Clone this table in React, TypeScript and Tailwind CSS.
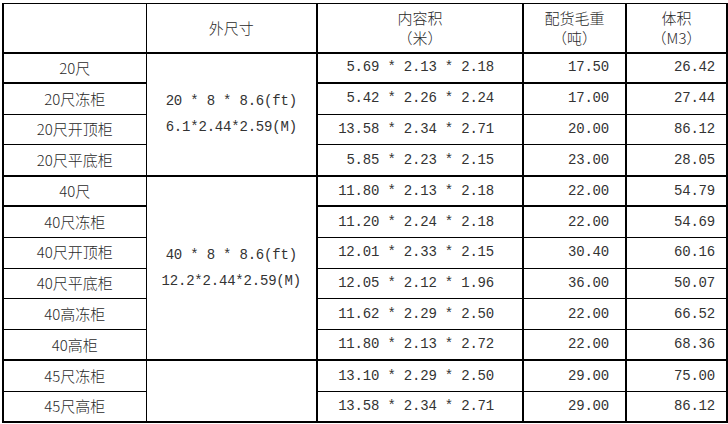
const rows = [
  { name: "20尺", inner: "5.69 * 2.13 * 2.18", weight: "17.50", vol: "26.42" },
  { name: "20尺冻柜", inner: "5.42 * 2.26 * 2.24", weight: "17.00", vol: "27.44" },
  { name: "20尺开顶柜", inner: "13.58 * 2.34 * 2.71", weight: "20.00", vol: "86.12" },
  { name: "20尺平底柜", inner: "5.85 * 2.23 * 2.15", weight: "23.00", vol: "28.05" },
  { name: "40尺", inner: "11.80 * 2.13 * 2.18", weight: "22.00", vol: "54.79" },
  { name: "40尺冻柜", inner: "11.20 * 2.24 * 2.18", weight: "22.00", vol: "54.69" },
  { name: "40尺开顶柜", inner: "12.01 * 2.33 * 2.15", weight: "30.40", vol: "60.16" },
  { name: "40尺平底柜", inner: "12.05 * 2.12 * 1.96", weight: "36.00", vol: "50.07" },
  { name: "40高冻柜", inner: "11.62 * 2.29 * 2.50", weight: "22.00", vol: "66.52" },
  { name: "40高柜", inner: "11.80 * 2.13 * 2.72", weight: "22.00", vol: "68.36" },
  { name: "45尺冻柜", inner: "13.10 * 2.29 * 2.50", weight: "29.00", vol: "75.00" },
  { name: "45尺高柜", inner: "13.58 * 2.34 * 2.71", weight: "29.00", vol: "86.12" },
];

// merged "外尺寸" cells: start row -> span + text lines
const outer: Record<number, { span: number; lines: string[] }> = {
  0: { span: 4, lines: ["20 * 8 * 8.6(ft)", "6.1*2.44*2.59(M)"] },
  4: { span: 6, lines: ["40 * 8 * 8.6(ft)", "12.2*2.44*2.59(M)"] },
  10: { span: 2, lines: [] },
};

const thickAfter = [0, 3, 4, 9, 11];

const cjk =
  "font-['Noto_Sans_CJK_SC',sans-serif] font-light text-[15px] text-[#2a2a2a] [text-spacing-trim:space-all]";
const mono = "font-['Liberation_Mono','Noto_Sans_CJK_SC',monospace] text-[14px] tracking-[-0.2px] text-[#333]";

export default function App() {
  return (
    <div className="w-[728px] h-[424px] bg-white pt-[3px] pl-[2px] overflow-hidden">
      <table className="border-collapse table-fixed w-[724px] border-l-2 border-r-2 border-b-2 border-t border-black">
        <colgroup>
          <col className="w-[143px]" />
          <col className="w-[171px]" />
          <col className="w-[206px]" />
          <col className="w-[103px]" />
          <col className="w-[101px]" />
        </colgroup>
        <thead>
          <tr className="h-[49px]">
            <th className="border border-black border-b-2 font-normal"></th>
            <th className={`border border-black border-b-2 border-r-2 ${cjk}`}>外尺寸</th>
            <th className={`border border-black border-b-2 border-r-2 leading-[20px] ${cjk}`}>
              内容积
              <br />
              （米）
            </th>
            <th className={`border border-black border-b-2 border-r-2 leading-[20px] ${cjk}`}>
              配货毛重
              <br />
              （吨）
            </th>
            <th className={`border border-black border-b-2 leading-[20px] ${cjk}`}>
              体积
              <br />
              （M3）
            </th>
          </tr>
        </thead>
        <tbody>
          {rows.map((r, i) => {
            const b = thickAfter.includes(i) ? "border-b-2" : "border-b";
            const g = outer[i];
            return (
              <tr key={i} className="h-[30.8px]">
                <td className={`border border-black ${b} text-center p-0 ${cjk}`}>{r.name}</td>
                {g && (
                  <td
                    rowSpan={g.span}
                    className={`border border-black border-b-2 border-r-2 text-center p-0 leading-[26px] ${mono}`}
                  >
                    {g.lines.map((l) => (
                      <div key={l}>{l}</div>
                    ))}
                  </td>
                )}
                <td className={`border border-black border-r-2 ${b} text-right pr-[28px] p-0 whitespace-pre ${mono}`}>
                  {r.inner}
                </td>
                <td className={`border border-black border-r-2 ${b} text-right pr-[16px] p-0 ${mono}`}>{r.weight}</td>
                <td className={`border border-black ${b} text-right pr-[11px] p-0 ${mono}`}>{r.vol}</td>
              </tr>
            );
          })}
        </tbody>
      </table>
    </div>
  );
}
